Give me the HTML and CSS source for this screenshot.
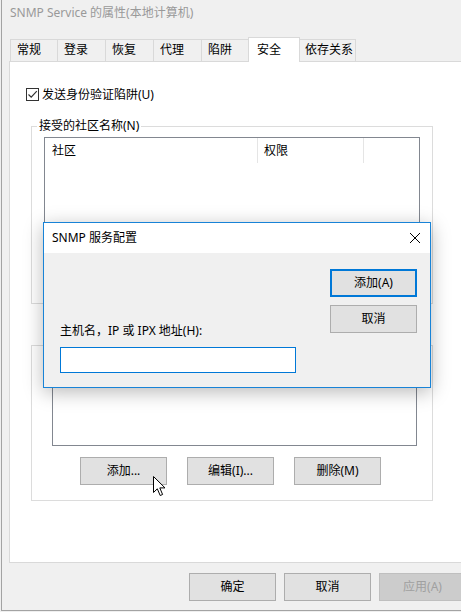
FILE: index.html
```html
<!DOCTYPE html>
<html lang="zh-CN">
<head>
<meta charset="utf-8">
<title>SNMP Service 的属性</title>
<link rel="stylesheet" href="styles.css">
</head>
<body>
<div class="win">
  <div class="titlebar">SNMP Service 的属性(本地计算机)</div>
  <div class="tabs">
    <div class="tab w48">常规</div>
    <div class="tab w49">登录</div>
    <div class="tab w49">恢复</div>
    <div class="tab w49">代理</div>
    <div class="tab w50">陷阱</div>
    <div class="tab sel">安全</div>
    <div class="tab w59">依存关系</div>
  </div>
  <div class="panel">
    <div class="checkrow">
      <span class="checkbox">
        <svg width="11" height="11" viewBox="0 0 11 11"><path d="M1.5 5.5 L4.2 8.2 L9.8 2.2" fill="none" stroke="#333" stroke-width="1.2"/></svg>
      </span>
      <span class="checklabel">发送身份验证陷阱(U)</span>
    </div>
    <div class="group g1">
      <span class="legend">接受的社区名称(N)</span>
      <div class="list l1">
        <div class="lvhead">
          <div class="col c1">社区</div>
          <div class="col c2">权限</div>
          <div class="col c3"></div>
        </div>
      </div>
    </div>
    <div class="group g2">
      <div class="list l2"></div>
      <div class="btnrow">
        <button class="btn">添加...</button>
        <button class="btn">编辑(I)...</button>
        <button class="btn">删除(M)</button>
      </div>
    </div>
  </div>
  <div class="footer">
    <button class="btn">确定</button>
    <button class="btn">取消</button>
    <button class="btn disabled">应用(A)</button>
  </div>
</div>

<div class="dialog">
  <div class="dtitle">
    <span>SNMP 服务配置</span>
    <svg class="close" width="10" height="10" viewBox="0 0 10 10"><path d="M0 0 L10 10 M10 0 L0 10" stroke="#000" stroke-width="1"/></svg>
  </div>
  <div class="dbody">
    <div class="dleft">
      <div class="dlabel">主机名，IP 或 IPX 地址(H):</div>
      <div class="dinput"></div>
    </div>
    <div class="dright">
      <button class="btn dbtn default">添加(A)</button>
      <button class="btn dbtn">取消</button>
    </div>
  </div>
</div>

<svg class="cursor" width="14" height="21" viewBox="0 0 14 21">
  <path d="M0.5 0.5 L0.5 16.5 L4.3 12.8 L7.2 19.5 L9.6 18.5 L6.8 11.9 L12 11.9 Z" fill="#fff" stroke="#000" stroke-width="1" stroke-linejoin="miter"/>
</svg>
</body>
</html>
```
FILE: styles.css
```css
html, body {
  margin: 0;
  padding: 0;
  width: 461px;
  height: 612px;
  overflow: hidden;
  background: #efefef;
  font-family: "Noto Sans", "Noto Sans CJK SC", sans-serif;
  font-size: 12px;
  color: #000;
}
body { position: relative; }

.win {
  margin-left: 1px;
  width: 480px;
  height: 611px;
  box-sizing: border-box;
  border-left: 1px solid #a3a3a3;
  border-bottom: 1px solid #a3a3a3;
  background: #f0f0f0;
}

.titlebar {
  height: 30px;
  line-height: 26px;
  padding-left: 8px;
  color: #999;
  font-size: 12px;
}

.tabs {
  position: relative;
  z-index: 1;
  display: flex;
  align-items: flex-end;
  height: 25px;
  margin-top: 7px;
  margin-bottom: -1px;
  padding-left: 8px;
}
.tab {
  box-sizing: border-box;
  height: 22px;
  margin-bottom: 1px;
  margin-left: -1px;
  border: 1px solid #d9d9d9;
  border-bottom: none;
  background: #f0f0f0;
  padding-left: 6px;
  line-height: 20px;
  white-space: nowrap;
}
.tab:first-child { margin-left: 0; }
.w48 { width: 48px; }
.w49 { width: 49px; }
.w50 { width: 50px; }
.w59 { width: 59px; margin-left: -3px; padding-left: 7px; }
.tab.sel {
  width: 52px;
  height: 25px;
  margin-bottom: 0;
  margin-left: -3px;
  background: #fff;
  padding-left: 8px;
  line-height: 23px;
  position: relative;
  z-index: 2;
}

.panel {
  margin-left: 7px;
  height: 502px;
  box-sizing: border-box;
  border: 1px solid #d9d9d9;
  background: #fff;
  overflow: hidden;
}

.checkrow {
  display: flex;
  align-items: center;
  height: 13px;
  margin: 26px 0 0 16px;
}
.checkbox {
  box-sizing: border-box;
  width: 13px;
  height: 13px;
  border: 1px solid #333;
  display: flex;
  align-items: center;
  justify-content: center;
}
.checkbox svg { display: block; }
.checklabel {
  margin-left: 3px;
  line-height: 13px;
  white-space: nowrap;
}

.group {
  box-sizing: border-box;
  width: 402px;
  margin-left: 21px;
  border: 1px solid #dcdcdc;
}
.g1 { height: 178px; margin-top: 25px; }
.g2 { height: 156px; margin-top: 41px; }

.legend {
  display: block;
  width: fit-content;
  margin: -9px 0 0 5px;
  padding: 0 2px;
  line-height: 16px;
  background: #fff;
  white-space: nowrap;
}

.list {
  box-sizing: border-box;
  border: 1px solid #828790;
  background: #fff;
}
.l1 {
  width: 376px;
  height: 125px;
  margin: 3px 0 0 12px;
}
.l2 {
  width: 365px;
  height: 84px;
  margin: 16px 0 0 20px;
}

.lvhead {
  display: flex;
  height: 25px;
}
.col {
  box-sizing: border-box;
  height: 25px;
  line-height: 25px;
  border-right: 1px solid #e5e5e5;
  padding-left: 7px;
}
.c1 { width: 213px; }
.c2 { width: 106px; padding-left: 6px; }
.c3 { flex: 1; border-right: none; }

.btnrow {
  display: flex;
  gap: 20px;
  margin: 11px 0 0 48px;
}

.btn {
  box-sizing: border-box;
  width: 87px;
  height: 28px;
  padding: 0;
  margin: 0;
  border: 1px solid #adadad;
  background: #e1e1e1;
  font-family: inherit;
  font-size: 12px;
  line-height: 16px;
  color: #000;
  text-align: center;
}
.btn.disabled {
  background: #cccccc;
  border-color: #bfbfbf;
  color: #a0a0a0;
}

.footer {
  display: flex;
  gap: 8px;
  margin: 10px 0 0 187px;
}

.dialog {
  position: absolute;
  left: 43px;
  top: 222px;
  width: 388px;
  height: 166px;
  box-sizing: border-box;
  border: 1px solid #1883d7;
  background: #f0f0f0;
  box-shadow: 0 4px 18px rgba(0, 0, 0, 0.28);
  display: flex;
  flex-direction: column;
  z-index: 5;
}
.dtitle {
  height: 30px;
  background: #fff;
  display: flex;
  align-items: center;
  justify-content: space-between;
  padding: 0 10px 0 8px;
  line-height: 16px;
}
.close { display: block; margin-top: -1px; }
.dbody {
  flex: 1;
  display: flex;
  justify-content: space-between;
}
.dleft {
  padding: 70px 0 0 16px;
}
.dlabel {
  line-height: 16px;
  white-space: nowrap;
}
.dinput {
  box-sizing: border-box;
  width: 236px;
  height: 26px;
  margin-top: 8px;
  border: 1px solid #0078d7;
  background: #fff;
}
.dright {
  display: flex;
  flex-direction: column;
  gap: 8px;
  padding: 16px 13px 0 0;
}
.dbtn.default {
  border: 2px solid #0078d7;
}

.cursor {
  position: absolute;
  left: 153px;
  top: 476px;
  z-index: 10;
}
```
